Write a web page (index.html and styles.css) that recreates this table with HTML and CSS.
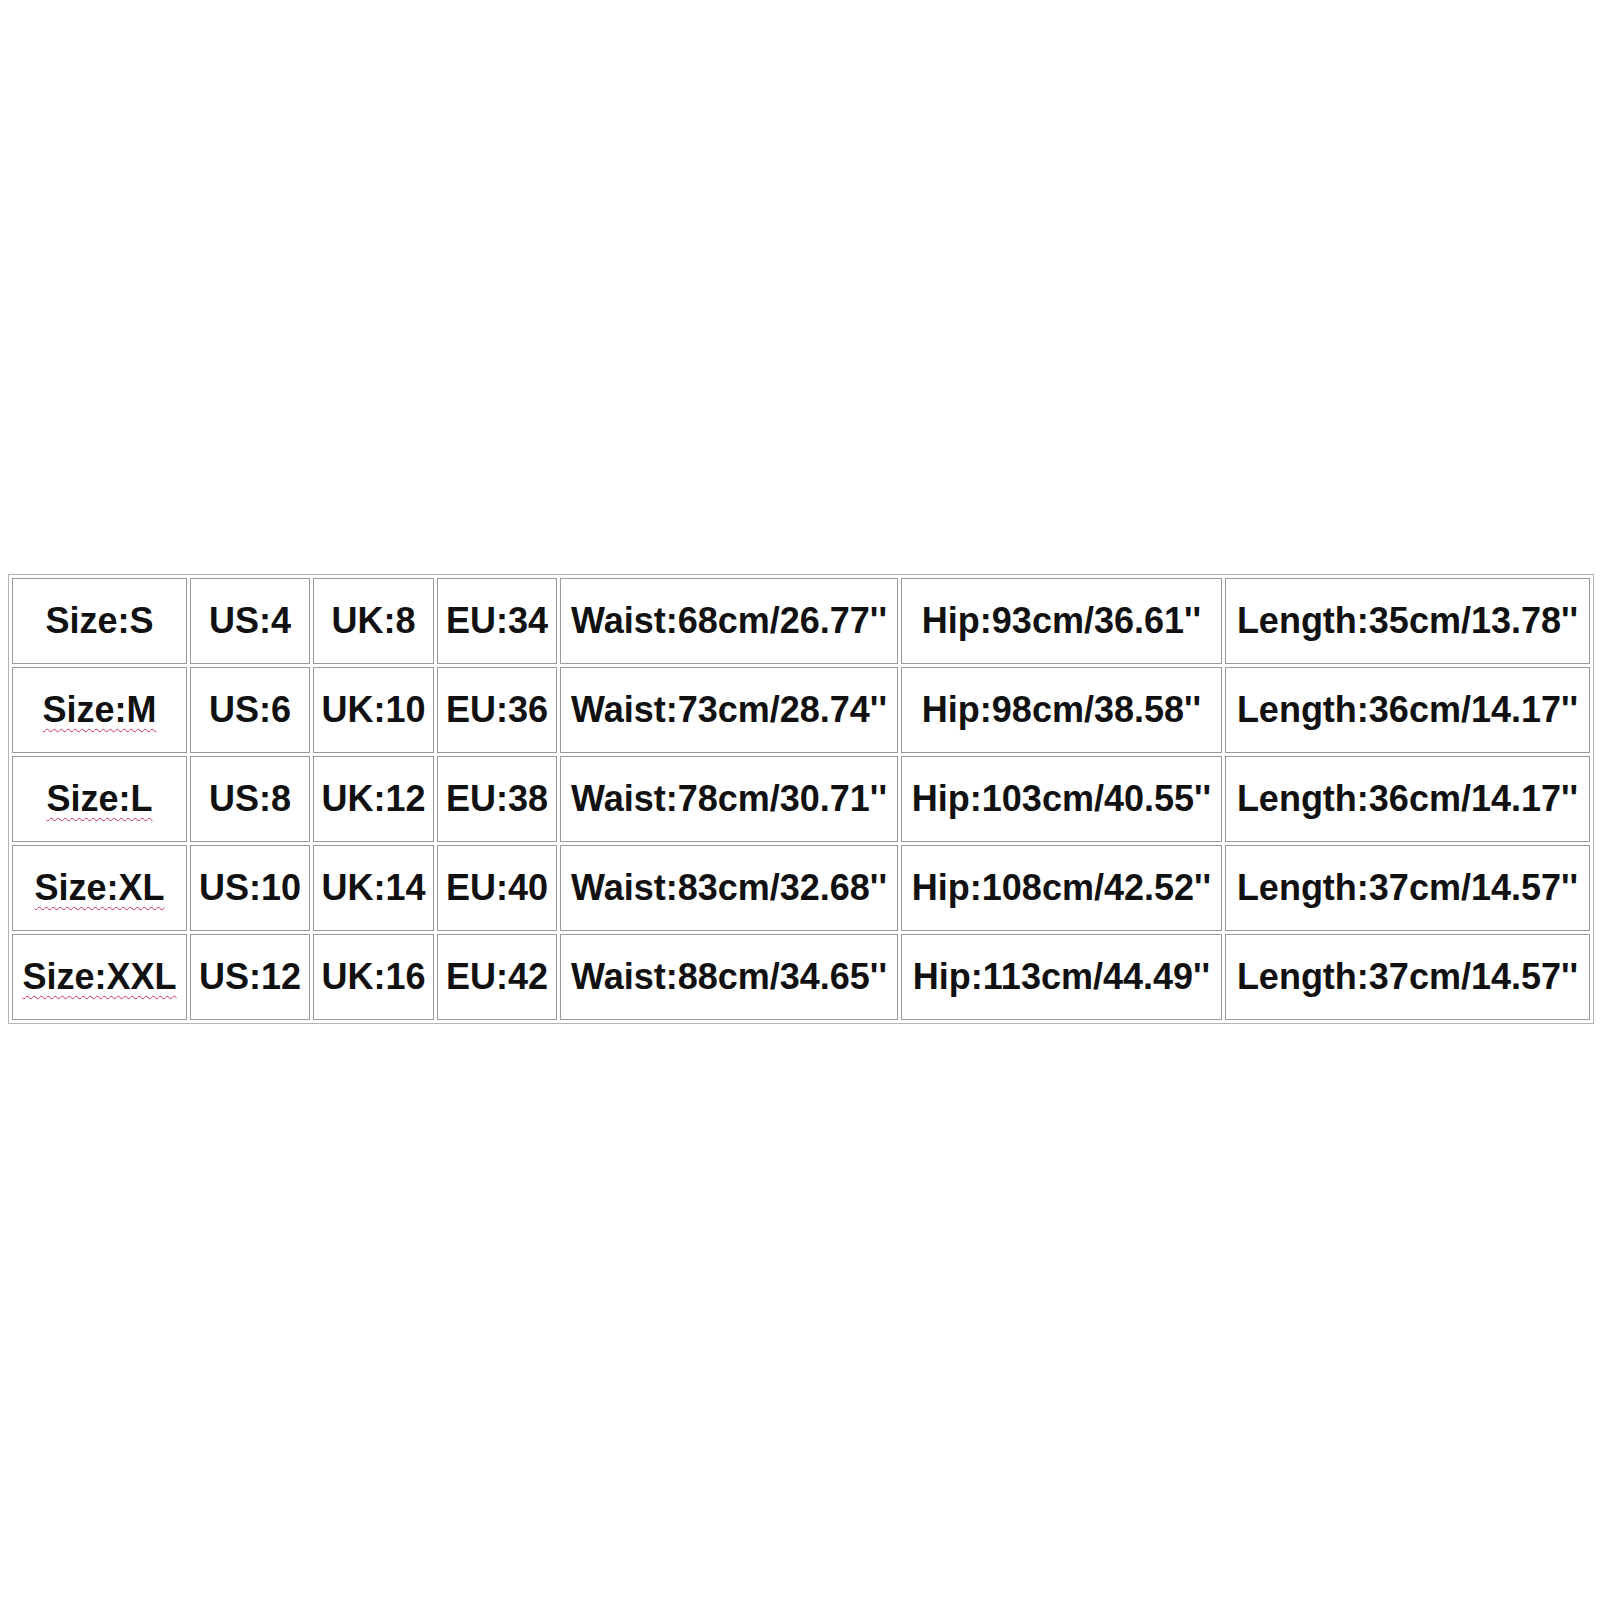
FILE: index.html
```html
<!DOCTYPE html>
<html>
<head>
<meta charset="utf-8">
<link rel="stylesheet" href="styles.css">
</head>
<body>
<div class="page">
<table class="size-table">
  <colgroup>
    <col class="c-size"><col class="c-us"><col class="c-uk"><col class="c-eu"><col class="c-waist"><col class="c-hip"><col class="c-len">
  </colgroup>
  <tbody>
    <tr><td>Size:S</td><td>US:4</td><td>UK:8</td><td>EU:34</td><td>Waist:68cm/26.77''</td><td>Hip:93cm/36.61''</td><td>Length:35cm/13.78''</td></tr>
    <tr><td><span class="spell">Size:M</span></td><td>US:6</td><td>UK:10</td><td>EU:36</td><td>Waist:73cm/28.74''</td><td>Hip:98cm/38.58''</td><td>Length:36cm/14.17''</td></tr>
    <tr><td><span class="spell">Size:L</span></td><td>US:8</td><td>UK:12</td><td>EU:38</td><td>Waist:78cm/30.71''</td><td>Hip:103cm/40.55''</td><td>Length:36cm/14.17''</td></tr>
    <tr><td><span class="spell">Size:XL</span></td><td>US:10</td><td>UK:14</td><td>EU:40</td><td>Waist:83cm/32.68''</td><td>Hip:108cm/42.52''</td><td>Length:37cm/14.57''</td></tr>
    <tr><td><span class="spell">Size:XXL</span></td><td>US:12</td><td>UK:16</td><td>EU:42</td><td>Waist:88cm/34.65''</td><td>Hip:113cm/44.49''</td><td>Length:37cm/14.57''</td></tr>
  </tbody>
</table>
</div>
</body>
</html>
```
FILE: styles.css
```css
html, body {
  margin: 0;
  padding: 0;
  background: #ffffff;
}
.page {
  padding: 574px 0 0 8px;
  min-height: 1600px;
  box-sizing: border-box;
}
.size-table {
  width: 1586px;
  table-layout: fixed;
  border-collapse: separate;
  border-spacing: 3px;
  border: 1px solid #b4b4b4;
  font-family: "Liberation Sans", Arial, sans-serif;
  font-weight: bold;
  font-size: 36px;
  color: #111111;
}
.c-size { width: 175px; }
.c-us { width: 120px; }
.c-uk { width: 121px; }
.c-eu { width: 120px; }
.c-waist { width: 338px; }
.c-hip { width: 321px; }
.c-len { width: 365px; }
.size-table tr {
  height: 86px;
}
.size-table td {
  border: 1px solid #9a9a9a;
  padding: 0;
  text-align: center;
  vertical-align: middle;
  white-space: nowrap;
  overflow: visible;
}
.spell {
  text-decoration: underline wavy #c8306a;
  text-decoration-thickness: 1px;
  text-underline-offset: 6px;
}
```
